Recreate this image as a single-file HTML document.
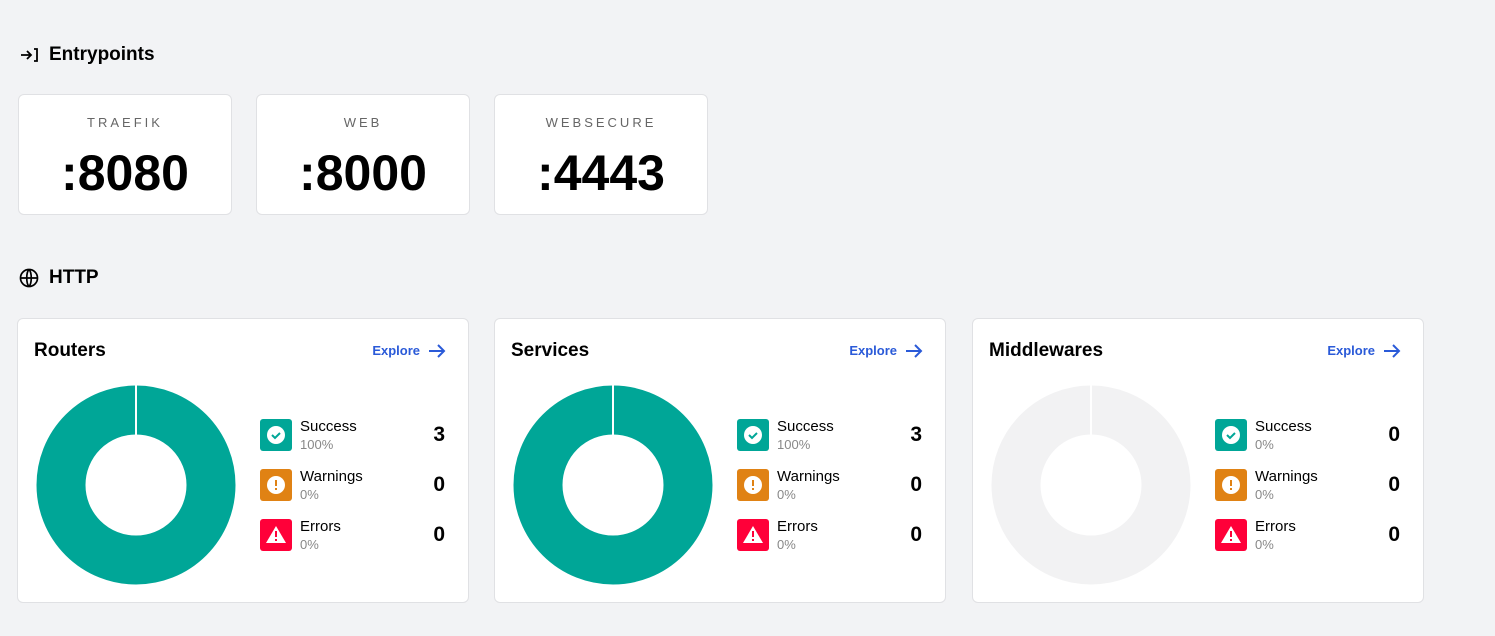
<!DOCTYPE html>
<html><head><style>
body{margin:0;width:1495px;height:636px;background:#f2f3f5;font-family:"Liberation Sans",sans-serif;position:relative;overflow:hidden;color:#000}
.h{position:absolute;left:19px;font-size:19px;font-weight:bold;display:flex;align-items:center;gap:10px}
.ep{position:absolute;top:94px;width:212px;height:119px;background:#fff;border:1px solid #e0e1e4;border-radius:6px;text-align:center}
.ep .l{margin-top:20px;font-size:13px;letter-spacing:3px;color:#666}
.ep .n{font-size:50px;font-weight:bold;margin-top:14px;letter-spacing:0}
.c{position:absolute;top:318px;width:450px;height:283px;background:#fff;border:1px solid #e0e1e4;border-radius:6px}
.c .t{position:absolute;left:16px;top:21px;font-size:19px;font-weight:bold}
.c .x{position:absolute;right:22px;top:24px;font-size:13px;font-weight:bold;color:#2a5ad8;display:flex;align-items:center;gap:8px}
.d{position:absolute;left:18px;top:66px}
.r{position:absolute;left:242px;width:185px;height:34px}
.r .i{position:absolute;left:0;top:0;width:32px;height:32px;border-radius:3px}
.r .a{position:absolute;left:40px;top:-1px;font-size:15px}
.r .p{position:absolute;left:40px;top:18px;font-size:13px;color:#888}
.r .v{position:absolute;right:0;top:4px;font-size:21px;font-weight:bold}
</style></head><body>
<div class="h" style="top:44px"><svg width="20" height="20" viewBox="0 0 20 20" fill="none" stroke="#000" stroke-width="1.8"><path d="M2 10h10M8 6l4 4-4 4M15 4h3v12h-3"/></svg>Entrypoints</div>
<div class="ep" style="left:18px"><div class="l">TRAEFIK</div><div class="n">:8080</div></div>
<div class="ep" style="left:256px"><div class="l">WEB</div><div class="n">:8000</div></div>
<div class="ep" style="left:494px"><div class="l">WEBSECURE</div><div class="n">:4443</div></div>
<div class="h" style="top:267px"><svg width="20" height="20" viewBox="0 0 20 20" fill="none" stroke="#000" stroke-width="1.7"><circle cx="10" cy="10" r="8.5"/><path d="M1.5 10h17M10 1.5c-3 3-3 14 0 17M10 1.5c3 3 3 14 0 17"/></svg>HTTP</div>

<div class="c" style="left:17px"><div class="t">Routers</div><div class="x">Explore <svg width="18" height="14" viewBox="0 0 18 14" fill="none" stroke="#2a5ad8" stroke-width="2"><path d="M1 7h15M10 1l6 6-6 6"/></svg></div>
<svg class="d" width="200" height="200"><circle cx="100" cy="100" r="75" fill="none" stroke="#00a697" stroke-width="49"/><line x1="100" y1="0" x2="100" y2="50" stroke="#fff" stroke-width="2"/></svg>
<div class="r" style="top:100px"><div class="i" style="background:#00a697"><svg width="32" height="32"><circle cx="16" cy="16" r="9" fill="#fff"/><path d="M12 16l3 3 5-5" fill="none" stroke="#00a697" stroke-width="2"/></svg></div><div class="a">Success</div><div class="p">100%</div><div class="v">3</div></div>
<div class="r" style="top:150px"><div class="i" style="background:#e08214"><svg width="32" height="32"><circle cx="16" cy="16" r="9" fill="#fff"/><path d="M16 11v6M16 19v2" stroke="#e08214" stroke-width="2"/></svg></div><div class="a">Warnings</div><div class="p">0%</div><div class="v">0</div></div>
<div class="r" style="top:200px"><div class="i" style="background:#ff0039"><svg width="32" height="32"><path d="M16 7l10 17H6z" fill="#fff"/><path d="M16 12v6M16 20v2" stroke="#ff0039" stroke-width="2"/></svg></div><div class="a">Errors</div><div class="p">0%</div><div class="v">0</div></div>
</div>

<div class="c" style="left:494px"><div class="t">Services</div><div class="x">Explore <svg width="18" height="14" viewBox="0 0 18 14" fill="none" stroke="#2a5ad8" stroke-width="2"><path d="M1 7h15M10 1l6 6-6 6"/></svg></div>
<svg class="d" width="200" height="200"><circle cx="100" cy="100" r="75" fill="none" stroke="#00a697" stroke-width="49"/><line x1="100" y1="0" x2="100" y2="50" stroke="#fff" stroke-width="2"/></svg>
<div class="r" style="top:100px"><div class="i" style="background:#00a697"><svg width="32" height="32"><circle cx="16" cy="16" r="9" fill="#fff"/><path d="M12 16l3 3 5-5" fill="none" stroke="#00a697" stroke-width="2"/></svg></div><div class="a">Success</div><div class="p">100%</div><div class="v">3</div></div>
<div class="r" style="top:150px"><div class="i" style="background:#e08214"><svg width="32" height="32"><circle cx="16" cy="16" r="9" fill="#fff"/><path d="M16 11v6M16 19v2" stroke="#e08214" stroke-width="2"/></svg></div><div class="a">Warnings</div><div class="p">0%</div><div class="v">0</div></div>
<div class="r" style="top:200px"><div class="i" style="background:#ff0039"><svg width="32" height="32"><path d="M16 7l10 17H6z" fill="#fff"/><path d="M16 12v6M16 20v2" stroke="#ff0039" stroke-width="2"/></svg></div><div class="a">Errors</div><div class="p">0%</div><div class="v">0</div></div>
</div>

<div class="c" style="left:972px"><div class="t">Middlewares</div><div class="x">Explore <svg width="18" height="14" viewBox="0 0 18 14" fill="none" stroke="#2a5ad8" stroke-width="2"><path d="M1 7h15M10 1l6 6-6 6"/></svg></div>
<svg class="d" width="200" height="200"><circle cx="100" cy="100" r="75" fill="none" stroke="#f2f2f3" stroke-width="49"/><line x1="100" y1="0" x2="100" y2="50" stroke="#fff" stroke-width="2"/></svg>
<div class="r" style="top:100px"><div class="i" style="background:#00a697"><svg width="32" height="32"><circle cx="16" cy="16" r="9" fill="#fff"/><path d="M12 16l3 3 5-5" fill="none" stroke="#00a697" stroke-width="2"/></svg></div><div class="a">Success</div><div class="p">0%</div><div class="v">0</div></div>
<div class="r" style="top:150px"><div class="i" style="background:#e08214"><svg width="32" height="32"><circle cx="16" cy="16" r="9" fill="#fff"/><path d="M16 11v6M16 19v2" stroke="#e08214" stroke-width="2"/></svg></div><div class="a">Warnings</div><div class="p">0%</div><div class="v">0</div></div>
<div class="r" style="top:200px"><div class="i" style="background:#ff0039"><svg width="32" height="32"><path d="M16 7l10 17H6z" fill="#fff"/><path d="M16 12v6M16 20v2" stroke="#ff0039" stroke-width="2"/></svg></div><div class="a">Errors</div><div class="p">0%</div><div class="v">0</div></div>
</div>
</body></html>
